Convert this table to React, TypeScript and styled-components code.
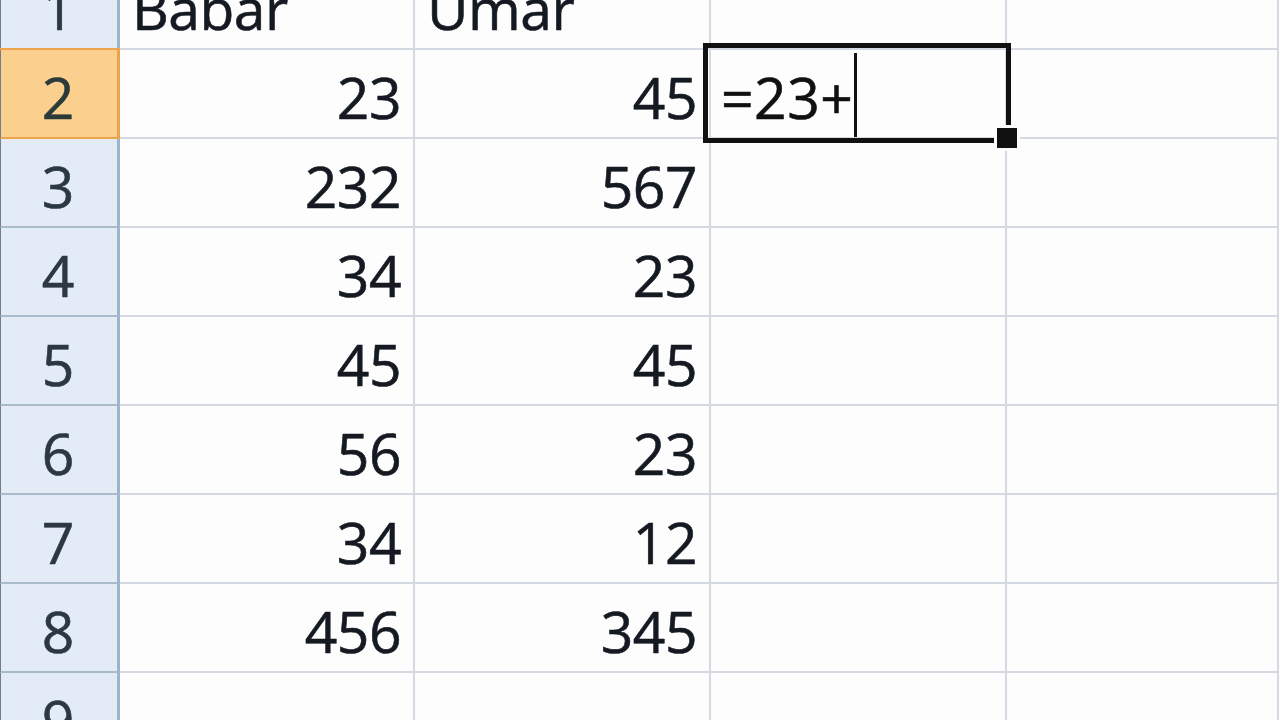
import React from "react";
import styled, { createGlobalStyle, css } from "styled-components";

const Global = createGlobalStyle`
  html, body {
    margin: 0;
    padding: 0;
    background: #fdfdfd;
    overflow: hidden;
  }
  #root {
    width: 1279px;
    height: 720px;
    overflow: hidden;
  }
`;

const GRID = "#d4d9e2";

const Sheet = styled.div`
  display: grid;
  grid-template-columns: 120px 295px 296px 296px 1fr;
  grid-auto-rows: 89px;
  margin-top: -39px;
  width: 1279px;
  font-family: "Open Sans", "Noto Sans", sans-serif;
  font-size: 57px;
  line-height: 56px;
  letter-spacing: -0.5px;
  -webkit-text-stroke: 0.6px currentColor;
`;

const RowHeader = styled.div<{ $selected?: boolean }>`
  box-sizing: border-box;
  display: flex;
  justify-content: center;
  align-items: flex-start;
  padding-top: 19px;
  padding-right: 2px;
  background: #e3ebf6;
  border-left: 1px solid #6f7f8f;
  border-right: 3px solid #9fb4ca;
  border-bottom: 2px solid #a9bacb;
  color: #2b3844;
  letter-spacing: 0;
  position: relative;
  ${(p) =>
    p.$selected &&
    css`
      background: #fbd08e;
      border-right-color: #eca54c;
      border-bottom-color: #eca54c;
      box-shadow: 0 -2px 0 #eca54c;
      color: #2c3a3a;
    `}
`;

const Cell = styled.div<{ $align?: "left" | "right" }>`
  box-sizing: border-box;
  position: relative;
  display: flex;
  align-items: flex-start;
  justify-content: ${(p) => (p.$align === "right" ? "flex-end" : "flex-start")};
  padding: 19px 12px 0 12px;
  background: #fdfdfd;
  border-right: 2px solid ${GRID};
  border-bottom: 2px solid ${GRID};
  color: #151a22;
  white-space: nowrap;
`;

const EditCell = styled(Cell)`
  padding-left: 10px;
  color: #101010;
  letter-spacing: 0.5px;
`;

const Caret = styled.span`
  display: block;
  width: 3px;
  height: 84px;
  margin-top: -16px;
  margin-left: 1px;
  background: #111;
`;

const Selection = styled.div`
  position: absolute;
  z-index: 5;
  top: -7px;
  left: -8px;
  right: -6px;
  bottom: -6px;
  border: 5px solid #111;
  pointer-events: none;
`;

const FillHandle = styled.div`
  position: absolute;
  right: -14px;
  bottom: -13px;
  width: 20px;
  height: 20px;
  background: #111;
  border: 3px solid #fdfdfd;
`;

type Row = { n: number; b?: string | number; c?: string | number };

const rows: Row[] = [
  { n: 1, b: "Babar", c: "Umar" },
  { n: 2, b: 23, c: 45 },
  { n: 3, b: 232, c: 567 },
  { n: 4, b: 34, c: 23 },
  { n: 5, b: 45, c: 45 },
  { n: 6, b: 56, c: 23 },
  { n: 7, b: 34, c: 12 },
  { n: 8, b: 456, c: 345 },
  { n: 9 },
];

const align = (v: unknown): "left" | "right" =>
  typeof v === "number" ? "right" : "left";

export default function App() {
  return (
    <>
      <Global />
      <Sheet>
        {rows.map((r) => (
          <React.Fragment key={r.n}>
            <RowHeader $selected={r.n === 2}>{r.n}</RowHeader>
            <Cell $align={align(r.b)}>{r.b}</Cell>
            <Cell $align={align(r.c)}>{r.c}</Cell>
            {r.n === 2 ? (
              <EditCell>
                <span>=23+</span>
                <Caret />
                <Selection>
                  <FillHandle />
                </Selection>
              </EditCell>
            ) : (
              <Cell />
            )}
            <Cell />
          </React.Fragment>
        ))}
      </Sheet>
    </>
  );
}
